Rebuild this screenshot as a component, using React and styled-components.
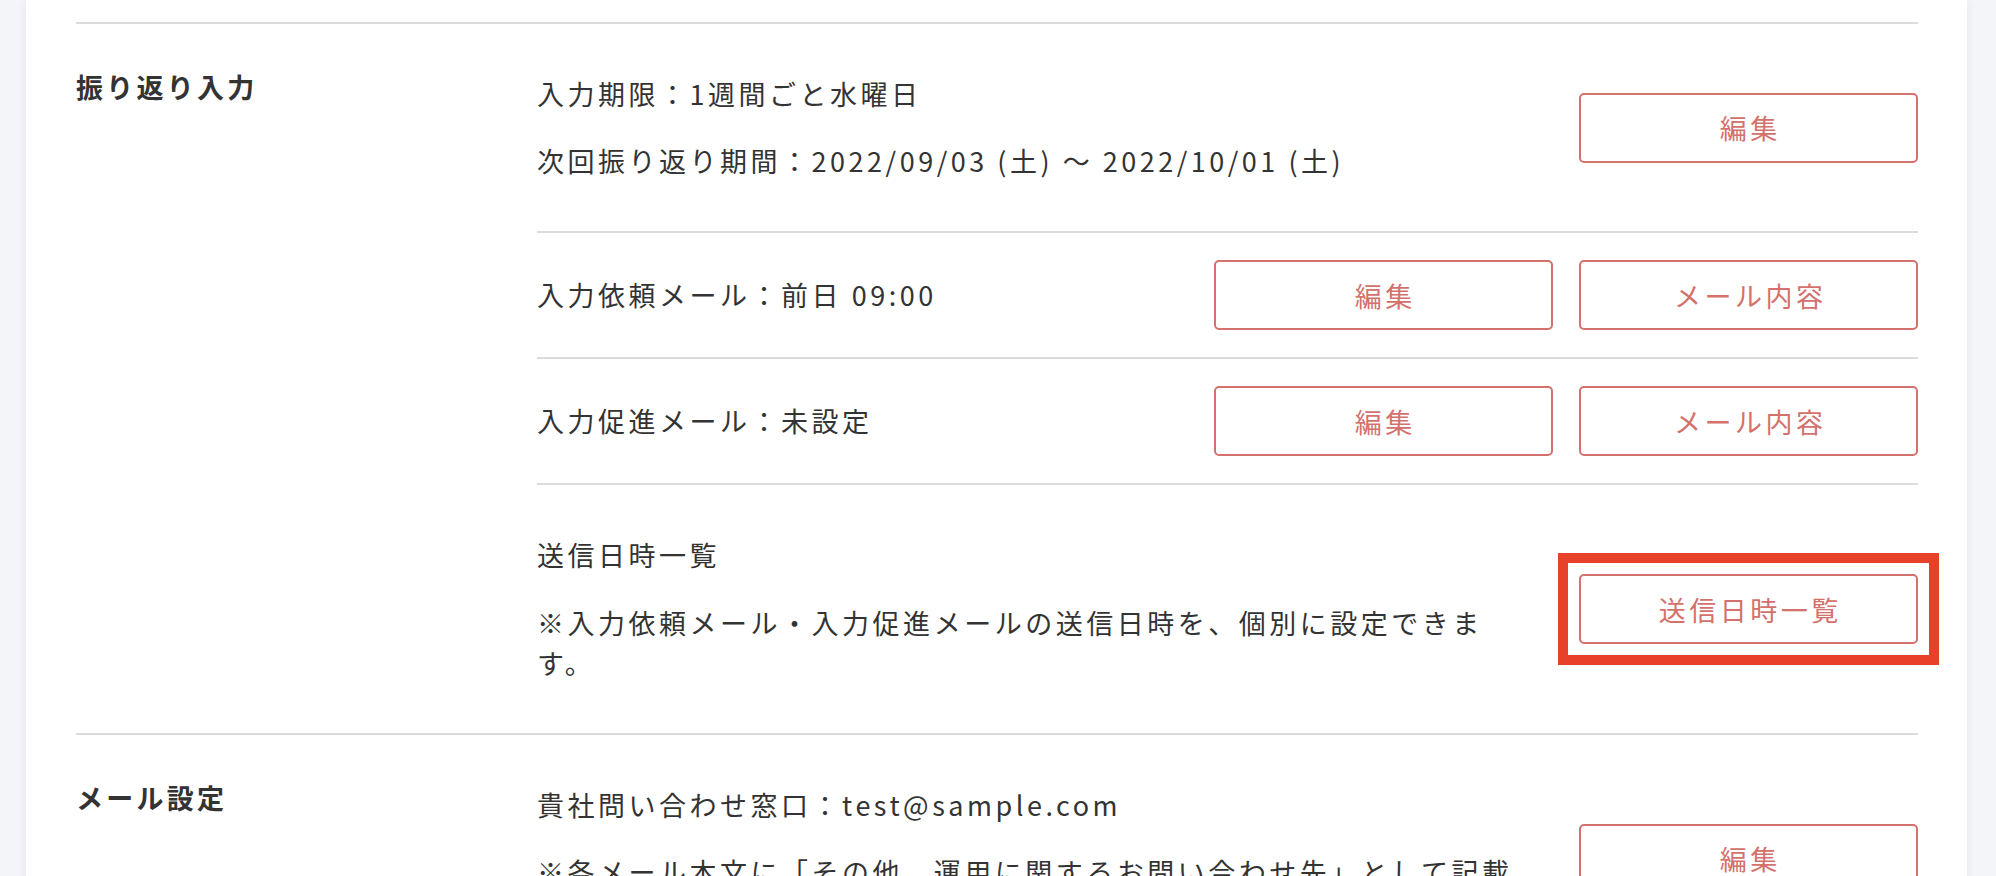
import React from 'react';
import styled, { createGlobalStyle } from 'styled-components';

const GlobalStyle = createGlobalStyle`
  html, body {
    margin: 0;
    padding: 0;
    background: #f4f5f9;
  }
  body {
    font-family: "Noto Sans CJK JP", "Noto Sans", sans-serif;
    color: #333;
    overflow: hidden;
  }
`;

const Page = styled.div`
  display: flex;
  min-height: 876px;
  padding: 0 29px 0 26px;
`;

const Panel = styled.main`
  flex: 1;
  background: #fff;
  box-shadow: 0 0 10px rgba(30, 40, 80, 0.07);
  padding: 22px 49px 0 50px;
`;

const Section = styled.section`
  display: grid;
  grid-template-columns: 461px 1fr;
  border-top: 2px solid #dcdcdc;
`;

const SectionLabel = styled.h2`
  margin: 0;
  padding-top: 43px;
  font-size: 27px;
  line-height: 40px;
  font-weight: 700;
  letter-spacing: 0.12em;
  color: #333;
`;

const Rows = styled.div`
  display: flex;
  flex-direction: column;
`;

const Row = styled.div`
  display: flex;
  align-items: center;
  justify-content: space-between;
  gap: 40px;
  padding: ${(p) => (p.$spacious ? '50px 0' : '27px 0')};
  & + & {
    border-top: 2px solid #dcdcdc;
  }
`;

const TextBlock = styled.div`
  flex: 1;
  min-width: 0;
  display: flex;
  flex-direction: column;
  gap: ${(p) => p.$gap || 27}px;
`;

const Line = styled.p`
  margin: 0;
  font-size: 27px;
  line-height: 40px;
  letter-spacing: 0.13em;
  color: #333;
`;

const Actions = styled.div`
  display: flex;
  gap: 26px;
  flex-shrink: 0;
`;

const Button = styled.button`
  width: 339px;
  height: 70px;
  box-sizing: border-box;
  border: 2px solid #d4716c;
  border-radius: 5px;
  background: #fff;
  color: #d4716c;
  font-family: inherit;
  font-size: 27px;
  letter-spacing: 0.13em;
  padding: 0 0 0 0.13em;
  cursor: pointer;
`;

const Highlight = styled.div`
  position: relative;
  &::after {
    content: '';
    position: absolute;
    inset: -21px;
    border: 10px solid #e8412a;
    pointer-events: none;
  }
`;

export default function App() {
  return (
    <>
      <GlobalStyle />
      <Page>
        <Panel>
          <Section>
            <SectionLabel>振り返り入力</SectionLabel>
            <Rows>
              <Row $spacious>
                <TextBlock>
                  <Line>入力期限：1週間ごと水曜日</Line>
                  <Line>次回振り返り期間：2022/09/03 (土) 〜 2022/10/01 (土)</Line>
                </TextBlock>
                <Actions>
                  <Button>編集</Button>
                </Actions>
              </Row>
              <Row>
                <TextBlock>
                  <Line>入力依頼メール：前日 09:00</Line>
                </TextBlock>
                <Actions>
                  <Button>編集</Button>
                  <Button>メール内容</Button>
                </Actions>
              </Row>
              <Row>
                <TextBlock>
                  <Line>入力促進メール：未設定</Line>
                </TextBlock>
                <Actions>
                  <Button>編集</Button>
                  <Button>メール内容</Button>
                </Actions>
              </Row>
              <Row $spacious>
                <TextBlock $gap={28}>
                  <Line>送信日時一覧</Line>
                  <Line>※入力依頼メール・入力促進メールの送信日時を、個別に設定できます。</Line>
                </TextBlock>
                <Actions>
                  <Highlight>
                    <Button>送信日時一覧</Button>
                  </Highlight>
                </Actions>
              </Row>
            </Rows>
          </Section>
          <Section>
            <SectionLabel>メール設定</SectionLabel>
            <Rows>
              <Row $spacious>
                <TextBlock>
                  <Line>貴社問い合わせ窓口：test@sample.com</Line>
                  <Line>※各メール本文に「その他、運用に関するお問い合わせ先」として記載されます。</Line>
                </TextBlock>
                <Actions>
                  <Button>編集</Button>
                </Actions>
              </Row>
            </Rows>
          </Section>
        </Panel>
      </Page>
    </>
  );
}
